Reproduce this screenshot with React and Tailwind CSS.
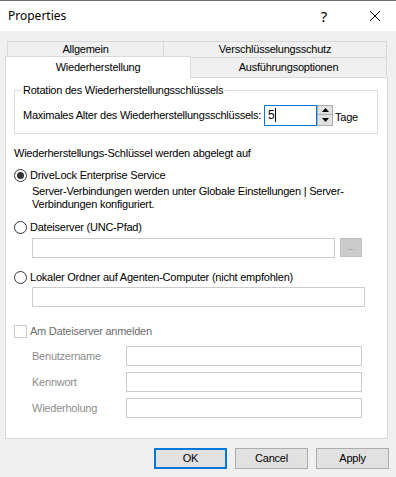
import React from 'react';

const ui = { fontFamily: '"Liberation Sans", Arial, sans-serif', letterSpacing: '-0.23px' };

function Radio({ checked, label }) {
  return (
    <div className="flex items-center h-[15px]">
      <span className="w-[13px] h-[13px] rounded-full border border-[#333333] bg-white flex items-center justify-center shrink-0">
        {checked && <span className="w-[7px] h-[7px] rounded-full bg-[#333333]" />}
      </span>
      <span className="ml-[3px] text-[11px] text-black whitespace-nowrap">{label}</span>
    </div>
  );
}

function Field({ className }) {
  return <div className={`h-[20px] border border-[#cccccc] bg-white ${className}`} />;
}

export default function App() {
  return (
    <div className="w-[396px] h-[477px] flex flex-col bg-[#f0f0f0] border-t border-[#707070] overflow-hidden" style={ui}>
      {/* Title bar */}
      <div className="h-[30px] bg-white flex items-center pl-[8px] shrink-0">
        <span className="text-[12px] text-black tracking-normal" style={{ fontFamily: '"Noto Sans", "Open Sans", sans-serif' }}>Properties</span>
        <span className="ml-auto mr-[42px] text-[15px] text-black" style={{ fontFamily: '"Noto Sans", sans-serif' }}>?</span>
        <svg width="12" height="12" viewBox="0 0 12 12" className="mr-[15px]">
          <path d="M1 1 L11 11 M11 1 L1 11" stroke="#000" strokeWidth="1" />
        </svg>
      </div>

      {/* Tabs */}
      <div className="pt-[10px] pl-[5px]">
        <div className="flex h-[16px] ml-[2px]">
          <div className="w-[156px] border-t border-l border-[#d9d9d9] text-[11px] flex items-center justify-center">Allgemein</div>
          <div className="w-[224px] border-t border-l border-r border-[#d9d9d9] text-[11px] flex items-center justify-center">Verschlüsselungsschutz</div>
        </div>
        <div className="flex h-[21px] -mt-[1px] relative z-10">
          <div className="w-[186px] h-[22px] bg-white border-t border-l border-r border-[#d9d9d9] text-[11px] flex items-start justify-center pt-[2px]">Wiederherstellung</div>
          <div className="w-[196px] mt-[1px] h-[19px] border-t border-r border-[#d9d9d9] text-[11px] flex items-center justify-center">Ausführungsoptionen</div>
        </div>

        {/* Panel */}
        <div className="w-[383px] h-[362px] bg-white border border-[#d9d9d9] flex flex-col pl-[8px]">
          {/* Group box */}
          <div className="relative mt-[12px] w-[364px] h-[44px] border border-[#dcdcdc] flex items-center pl-[8px]">
            <span className="absolute left-[6px] -top-[8px] bg-white px-[2px] text-[11px] leading-[14px] whitespace-nowrap">Rotation des Wiederherstellungsschlüssels</span>
            <span className="text-[11px] mt-[6px] whitespace-nowrap">Maximales Alter des Wiederherstellungsschlüssels:</span>
            <div className="flex ml-auto mt-[6px] mr-[44px]">
              <div className="w-[53px] h-[21px] border border-[#0078d7] bg-white flex items-center pl-[3px] text-[12px]">
                5<span className="w-px h-[14px] bg-black ml-px" />
              </div>
              <div className="w-[16px] h-[21px] flex flex-col bg-[#f0f0f0]">
                <div className="h-[10px] border border-[#adadad] bg-[#e1e1e1] flex items-center justify-center">
                  <svg width="7" height="4" viewBox="0 0 7 4"><path d="M0 4 L3.5 0 L7 4 Z" fill="#000" /></svg>
                </div>
                <div className="h-[11px] border border-t-0 border-[#adadad] bg-[#e1e1e1] flex items-center justify-center">
                  <svg width="7" height="4" viewBox="0 0 7 4"><path d="M0 0 L3.5 4 L7 0 Z" fill="#000" /></svg>
                </div>
              </div>
            </div>
            <span className="absolute left-[320px] top-[18px] text-[11px]">Tage</span>
          </div>

          <div className="mt-[13px] text-[11px] leading-[13px] whitespace-nowrap">Wiederherstellungs-Schlüssel werden abgelegt auf</div>

          <div className="mt-[8px]"><Radio checked label="DriveLock Enterprise Service" /></div>
          <div className="mt-[2px] ml-[18px] text-[11px] leading-[13px] whitespace-nowrap">
            Server-Verbindungen werden unter Globale Einstellungen | Server-<br />Verbindungen konfiguriert.
          </div>

          <div className="mt-[9px]"><Radio label="Dateiserver (UNC-Pfad)" /></div>
          <div className="mt-[3px] ml-[18px] flex gap-[5px]">
            <Field className="w-[303px]" />
            <div className="w-[22px] h-[19px] bg-[#cccccc] border border-[#bfbfbf] flex items-end justify-center pb-[4px]">
              <span className="text-[9px] leading-[9px] text-[#8a8a8a]">...</span>
            </div>
          </div>

          <div className="mt-[12px]"><Radio label="Lokaler Ordner auf Agenten-Computer (nicht empfohlen)" /></div>
          <div className="mt-[2px] ml-[18px]"><Field className="w-[333px]" /></div>

          <div className="mt-[17px] flex items-center h-[15px]">
            <span className="w-[13px] h-[13px] border border-[#cccccc] bg-white" />
            <span className="ml-[3px] text-[11px] text-[#6d6d6d]">Am Dateiserver anmelden</span>
          </div>

          <div className="mt-[7px] ml-[18px] flex flex-col gap-[6px]">
            {['Benutzername', 'Kennwort', 'Wiederholung'].map((l) => (
              <div key={l} className="flex items-center">
                <span className="w-[94px] text-[11px] text-[#8c8c8c]">{l}</span>
                <Field className="w-[236px]" />
              </div>
            ))}
          </div>
        </div>
      </div>

      {/* Buttons */}
      <div className="mt-[9px] flex justify-end pr-[7px] gap-[8px]">
        <button className="w-[73px] h-[21px] border-2 border-[#0078d7] bg-[#e1e1e1] text-[11px]">OK</button>
        <button className="w-[73px] h-[21px] border border-[#adadad] bg-[#e1e1e1] text-[11px]">Cancel</button>
        <button className="w-[73px] h-[21px] border border-[#adadad] bg-[#e1e1e1] text-[11px]">Apply</button>
      </div>
    </div>
  );
}
